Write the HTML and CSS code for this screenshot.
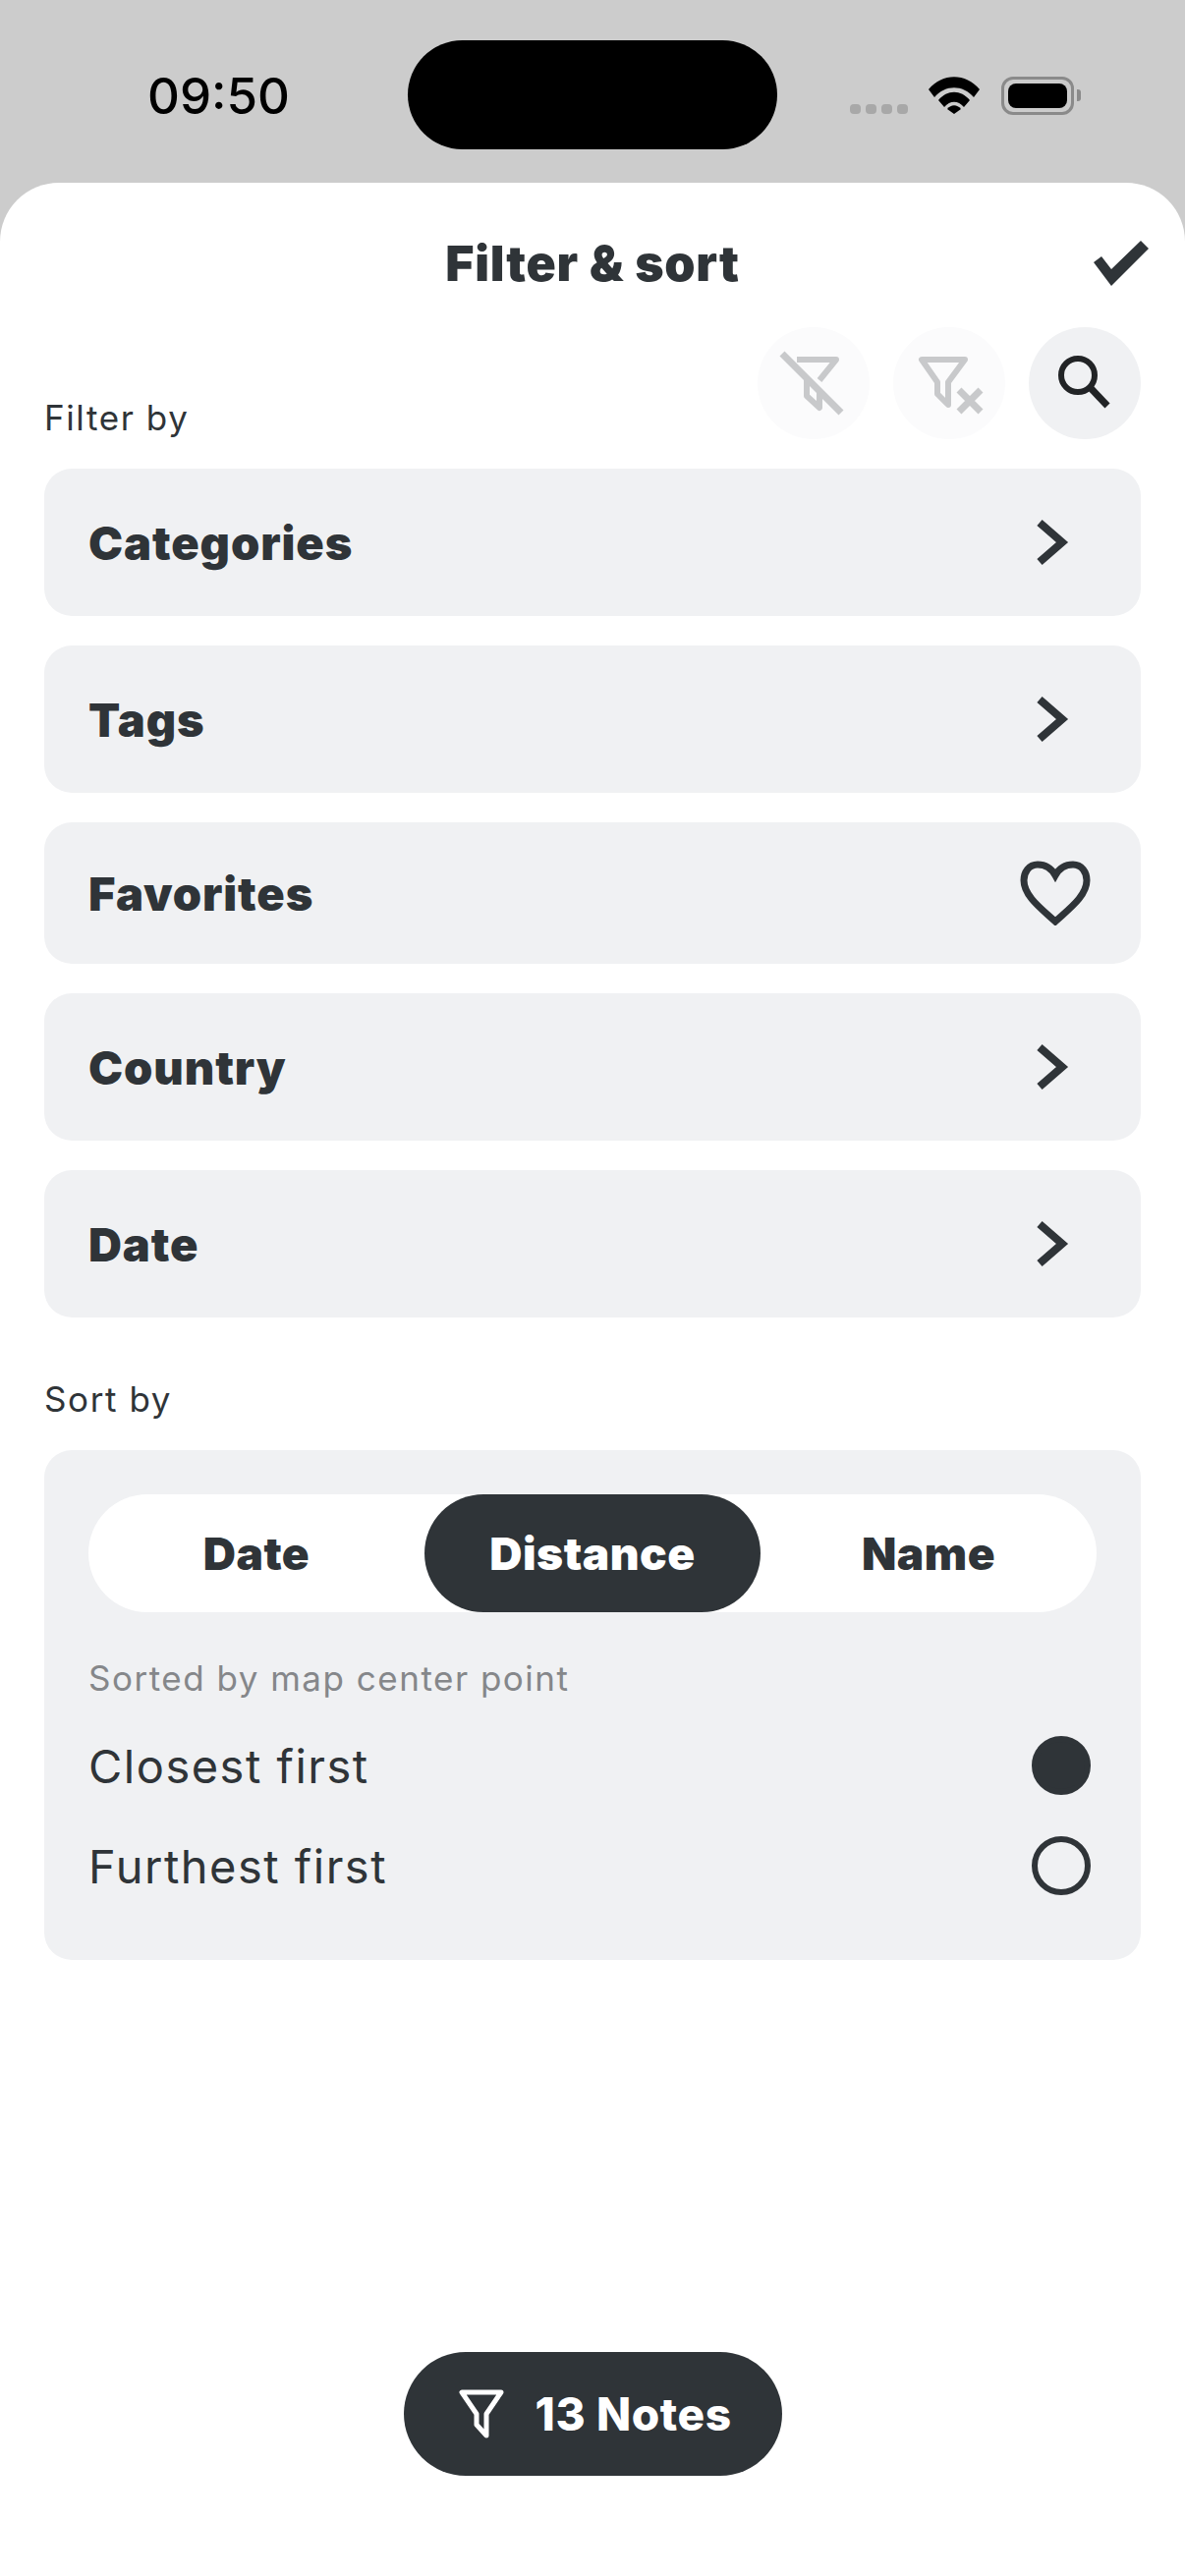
FILE: index.html
```html
<!DOCTYPE html>
<html lang="en">
<head>
    <meta charset="UTF-8">
    <meta name="viewport" content="width=device-width, initial-scale=1.0">
    <title>Filter &amp; sort</title>
    <link rel="stylesheet" href="styles.css">
</head>
<body>
<header class="status-bar">
    <div class="status-left"><span class="time">09:50</span></div>
    <div class="island"></div>
    <div class="status-right">
        <div class="signal"><i></i><i></i><i></i><i></i></div>
        <svg class="wifi" viewBox="0 0 52 38">
            <path d="M0 13 C14 -4 38 -4 52 13 L46 21 C35 8 17 8 6 21 Z" fill="#000"/>
            <path d="M10 24 C19 13 33 13 42 24 L36 31 C30 24 22 24 16 31 Z" fill="#000"/>
            <path d="M19 33 C23 28 29 28 33 33 L26 38 Z" fill="#000"/>
        </svg>
        <div class="battery"><div class="battery-fill"></div></div>
        <div class="battery-cap"></div>
    </div>
</header>
<main class="sheet">
    <div class="title-row">
        <span></span>
        <h1 class="title">Filter &amp; sort</h1>
        <svg class="check" viewBox="0 0 56 46"><path d="M0 22 L8 16 L18 29 L48 0 L56 8 L18 46 Z" fill="#2f3438"/></svg>
    </div>
    <div class="tools-row">
        <div class="section-label">Filter by</div>
        <div class="tools">
            <button class="tool tool-off">
                <svg viewBox="0 0 114 114" fill="none" stroke="#c8c9cb" stroke-width="6" stroke-linejoin="round">
                    <path d="M40 33 H80 L63 54"/>
                    <path d="M50 52 V70 L63 82 V66"/>
                    <path d="M25 27 L85 87" stroke-width="7"/>
                </svg>
            </button>
            <button class="tool tool-off">
                <svg viewBox="0 0 114 114" fill="none" stroke="#c8c9cb" stroke-width="6" stroke-linejoin="round">
                    <path d="M29 33 H73 L56 56 V79 L45 68 V56 Z"/>
                    <path d="M67 64 L89 86 M89 64 L67 86" stroke-width="7"/>
                </svg>
            </button>
            <button class="tool">
                <svg viewBox="0 0 114 114" fill="none" stroke="#222426" stroke-width="6">
                    <circle cx="50" cy="49" r="17"/>
                    <path d="M62 61 L80 80" stroke-width="7"/>
                </svg>
            </button>
        </div>
    </div>
    <section class="filter-list">
        <div class="filter-row"><span>Categories</span><svg class="chevron" viewBox="0 0 36 54"><path d="M6 7 L29 27 L6 47"/></svg></div>
        <div class="filter-row"><span>Tags</span><svg class="chevron" viewBox="0 0 36 54"><path d="M6 7 L29 27 L6 47"/></svg></div>
        <div class="filter-row filter-row-short"><span>Favorites</span>
            <svg class="heart" viewBox="0 0 72 66"><path d="M36 15 C31 6 24 4 18 4 C9 4 4 12 4 20 C4 36 22 49 36 62 C50 49 68 36 68 20 C68 12 63 4 54 4 C48 4 41 6 36 15 Z"/></svg>
        </div>
        <div class="filter-row"><span>Country</span><svg class="chevron" viewBox="0 0 36 54"><path d="M6 7 L29 27 L6 47"/></svg></div>
        <div class="filter-row"><span>Date</span><svg class="chevron" viewBox="0 0 36 54"><path d="M6 7 L29 27 L6 47"/></svg></div>
    </section>
    <div class="section-label sort-label">Sort by</div>
    <section class="sort-card">
        <div class="segments">
            <div class="segment">Date</div>
            <div class="segment segment-active">Distance</div>
            <div class="segment">Name</div>
        </div>
        <div class="sort-hint">Sorted by map center point</div>
        <div class="radio-row"><span>Closest first</span><span class="radio radio-on"></span></div>
        <div class="radio-row"><span>Furthest first</span><span class="radio"></span></div>
    </section>
    <div class="notes-wrap">
        <div class="notes-pill">
            <svg class="notes-icon" viewBox="0 0 50 54" fill="none" stroke="#fff" stroke-width="5" stroke-linejoin="round"><path d="M5 5 H45 L30 27 V49 L20 38 V27 Z"/></svg>
            <span>13 Notes</span>
        </div>
    </div>
</main>
</body>
</html>
```

FILE: styles.css
```css
* {
    box-sizing: border-box;
}
body {
    margin: 0;
    width: 1206px;
    height: 2622px;
    overflow: hidden;
    background-color: #cccccc;
    font-family: 'Inter', 'Liberation Sans', sans-serif;
    color: #2f3438;
}

/* status bar */
.status-bar {
    display: grid;
    grid-template-columns: 415px 376px 1fr;
    height: 186px;
    padding-top: 41px;
}
.status-left {
    height: 111px;
    padding: 2px 0 0 150px;
    display: flex;
    align-items: center;
}
.time {
    font-size: 51px;
    font-weight: 500;
    color: #000;
}
.island {
    height: 111px;
    background-color: #000;
    border-radius: 56px;
}
.status-right {
    display: flex;
    align-items: flex-start;
    padding: 37px 0 0 74px;
}
.signal {
    display: flex;
    gap: 5px;
    margin: 28px 21px 0 0;
}
.signal i {
    width: 11px;
    height: 10px;
    border-radius: 4px;
    background-color: #a8a8a8;
}
.wifi {
    width: 52px;
    height: 38px;
    margin-right: 22px;
}
.battery {
    width: 74px;
    height: 39px;
    padding: 4px;
    border: 3px solid #8a8a8a;
    border-radius: 12px;
}
.battery-fill {
    height: 100%;
    background-color: #000;
    border-radius: 8px;
}
.battery-cap {
    width: 4px;
    height: 12px;
    margin: 13px 0 0 3px;
    background-color: #8a8a8a;
    border-radius: 0 3px 3px 0;
}

/* sheet */
.sheet {
    height: 2436px;
    padding: 0 45px;
    background-color: #fff;
    border-radius: 60px 60px 0 0;
}
.title-row {
    display: grid;
    grid-template-columns: 1fr auto 1fr;
    align-items: center;
    height: 147px;
    padding-top: 16px;
}
.title {
    margin: 0;
    font-size: 50px;
    font-weight: 900;
    letter-spacing: 0.8px;
}
.check {
    width: 56px;
    height: 46px;
    justify-self: end;
    margin-right: -8px;
}
.tools-row {
    display: flex;
    justify-content: space-between;
    align-items: flex-end;
    height: 114px;
}
.section-label {
    font-size: 35px;
    line-height: 42px;
    letter-spacing: 1.6px;
}
.tools-row .section-label {
    margin-bottom: 1px;
}
.tools {
    display: flex;
    gap: 24px;
}
.tool {
    width: 114px;
    height: 114px;
    padding: 0;
    border: none;
    border-radius: 50%;
    background-color: #f0f1f3;
}
.tool svg {
    display: block;
    width: 114px;
    height: 114px;
}
.tool-off {
    background-color: #fbfbfc;
}

/* filter rows */
.filter-list {
    display: flex;
    flex-direction: column;
    gap: 30px;
    margin-top: 30px;
}
.filter-row {
    display: flex;
    justify-content: space-between;
    align-items: center;
    height: 150px;
    padding: 0 45px;
    background-color: #f0f1f3;
    border-radius: 28px;
    font-size: 47px;
    font-weight: 900;
    letter-spacing: 0.9px;
}
.filter-row-short {
    height: 144px;
    padding-right: 51px;
}
.chevron {
    width: 36px;
    height: 54px;
    margin-right: 28px;
    fill: none;
    stroke: #2f3438;
    stroke-width: 8;
}
.heart {
    width: 72px;
    height: 66px;
    fill: none;
    stroke: #2f3438;
    stroke-width: 7;
}

/* sort */
.sort-label {
    margin-top: 62px;
}
.sort-card {
    margin-top: 31px;
    height: 519px;
    padding: 45px;
    background-color: #f0f1f3;
    border-radius: 28px;
}
.segments {
    display: grid;
    grid-template-columns: repeat(3, 1fr);
    height: 120px;
    background-color: #fff;
    border-radius: 60px;
}
.segment {
    display: flex;
    justify-content: center;
    align-items: center;
    border-radius: 60px;
    font-size: 46px;
    font-weight: 900;
    letter-spacing: 0.5px;
}
.segment-active {
    background-color: #2f3438;
    color: #fff;
}
.sort-hint {
    margin: 46px 0 17px;
    font-size: 35px;
    line-height: 42px;
    letter-spacing: 1.5px;
    color: #85878a;
}
.radio-row {
    display: flex;
    justify-content: space-between;
    align-items: center;
    height: 102px;
    padding-right: 6px;
    font-size: 47px;
    letter-spacing: 1.5px;
}
.radio {
    width: 60px;
    height: 60px;
    border: 6px solid #2f3438;
    border-radius: 50%;
}
.radio-on {
    background-color: #2f3438;
}

/* bottom pill */
.notes-wrap {
    display: flex;
    justify-content: center;
    margin-top: 399px;
}
.notes-pill {
    display: flex;
    align-items: center;
    gap: 30px;
    width: 385px;
    height: 126px;
    padding-left: 54px;
    background-color: #2f3438;
    border-radius: 63px;
    color: #fff;
    font-size: 46px;
    font-weight: 800;
    letter-spacing: 0.6px;
}
.notes-icon {
    width: 50px;
    height: 54px;
}
```
